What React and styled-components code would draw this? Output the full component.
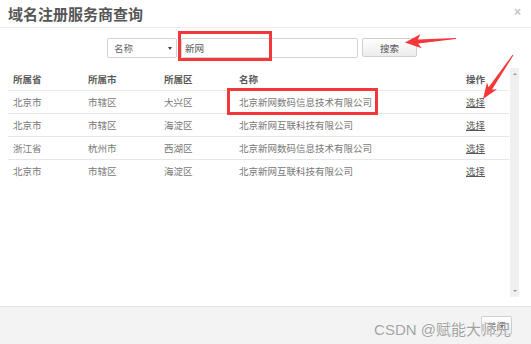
import styled, { createGlobalStyle } from "styled-components";

const GlobalStyle = createGlobalStyle`
  html, body {
    margin: 0;
    padding: 0;
    background: #fff;
  }
  body {
    font-family: "Noto Sans CJK SC", "Liberation Sans", sans-serif;
  }
`;

const Dialog = styled.div`
  position: relative;
  width: 531px;
  height: 344px;
  display: flex;
  flex-direction: column;
  overflow: hidden;
  background: #fff;
`;

const Header = styled.div`
  height: 27px;
  display: flex;
  align-items: center;
  justify-content: space-between;
  padding: 0 10px 0 8px;
  border-bottom: 1px solid #ececec;
`;

const Title = styled.h1`
  margin: 0;
  font-size: 15px;
  font-weight: bold;
  color: #555;
  line-height: 1;
`;

const Close = styled.span`
  font-family: "Liberation Sans", sans-serif;
  font-size: 12px;
  font-weight: bold;
  color: #c4c4c4;
  margin-top: -4px;
`;

const Body = styled.div`
  flex: 1;
  display: flex;
  flex-direction: column;
  padding: 10px 12px 0 8px;
`;

const SearchRow = styled.div`
  display: flex;
  align-items: flex-start;
  padding-left: 99px;
  gap: 4px;
  height: 21px;
`;

const Select = styled.div`
  width: 70px;
  height: 20px;
  box-sizing: border-box;
  border: 1px solid #d4d4d4;
  border-radius: 2px;
  display: flex;
  align-items: center;
  justify-content: space-between;
  padding: 0 4px 0 6px;
  font-size: 9.5px;
  color: #666;
`;

const Caret = styled.span`
  width: 0;
  height: 0;
  border-left: 2.5px solid transparent;
  border-right: 2.5px solid transparent;
  border-top: 3px solid #444;
`;

const Input = styled.input`
  width: 177px;
  height: 20px;
  box-sizing: border-box;
  border: 1px solid #d4d4d4;
  border-radius: 2px;
  padding: 0 3px;
  font-family: inherit;
  font-size: 9.5px;
  color: #555;
  outline: none;
`;

const Button = styled.button`
  width: ${(p) => p.$w || 55}px;
  height: ${(p) => p.$h || 19}px;
  box-sizing: border-box;
  border: 1px solid #cfcfcf;
  border-radius: 2px;
  background: linear-gradient(#fff, #ececec);
  font-family: inherit;
  font-size: 9.5px;
  color: #555;
  padding: 0;
`;

const TableWrap = styled.div`
  margin-top: 9px;
  height: 229px;
  display: flex;
`;

const Table = styled.table`
  flex: 1;
  align-self: flex-start;
  border-collapse: collapse;
  table-layout: fixed;
  font-size: 9.5px;
  color: #777;

  th {
    height: 22px;
    text-align: left;
    font-weight: bold;
    color: #5a5a5a;
    padding: 0 0 0 5px;
    border-bottom: 1px solid #eaeaea;
  }
  td {
    height: 22px;
    padding: 0 0 0 5px;
    border-bottom: 1px solid #e6e6e6;
    white-space: nowrap;
  }
  tr:last-child td {
    border-bottom: none;
  }
`;

const Pick = styled.a`
  color: #555;
  text-decoration: underline;
`;

const Scrollbar = styled.div`
  width: 9px;
  margin-left: 1px;
  background: #f0f0f0;
  display: flex;
  flex-direction: column;
  justify-content: space-between;
  align-items: center;
  padding: 5px 0;
  box-sizing: border-box;
`;

const ScrollArrow = styled.span`
  width: 0;
  height: 0;
  border-left: 2px solid transparent;
  border-right: 2px solid transparent;
  ${(p) =>
    p.$up ? "border-bottom: 2px solid #999;" : "border-top: 2px solid #999;"}
`;

const Footer = styled.div`
  height: 37px;
  border-top: 1px solid #e2e2e2;
  background: #f3f3f3;
  display: flex;
  align-items: center;
  justify-content: flex-end;
  padding: 0 19px 0 0;
`;

const Watermark = styled.div`
  position: absolute;
  right: 20px;
  bottom: 5px;
  font-family: "Liberation Sans", "Noto Sans CJK SC", sans-serif;
  font-size: 15px;
  color: #a2a2a2;
  text-shadow: 0 0 1px #fff, 0 0 1px #fff;
  pointer-events: none;
`;

const Marks = styled.svg`
  position: absolute;
  left: 0;
  top: 0;
  pointer-events: none;
`;

const rows = [
  ["北京市", "市辖区", "大兴区", "北京新网数码信息技术有限公司"],
  ["北京市", "市辖区", "海淀区", "北京新网互联科技有限公司"],
  ["浙江省", "杭州市", "西湖区", "北京新网数码信息技术有限公司"],
  ["北京市", "市辖区", "海淀区", "北京新网互联科技有限公司"],
];

export default function App() {
  return (
    <>
      <GlobalStyle />
      <Dialog>
        <Header>
          <Title>域名注册服务商查询</Title>
          <Close>×</Close>
        </Header>
        <Body>
          <SearchRow>
            <Select>
              名称
              <Caret />
            </Select>
            <Input defaultValue="新网" />
            <Button>搜索</Button>
          </SearchRow>
          <TableWrap>
            <Table>
              <colgroup>
                <col style={{ width: 75 }} />
                <col style={{ width: 76 }} />
                <col style={{ width: 75 }} />
                <col style={{ width: 227 }} />
                <col />
              </colgroup>
              <thead>
                <tr>
                  <th>所属省</th>
                  <th>所属市</th>
                  <th>所属区</th>
                  <th>名称</th>
                  <th>操作</th>
                </tr>
              </thead>
              <tbody>
                {rows.map((r, i) => (
                  <tr key={i}>
                    {r.map((c, j) => (
                      <td key={j}>{c}</td>
                    ))}
                    <td>
                      <Pick>选择</Pick>
                    </td>
                  </tr>
                ))}
              </tbody>
            </Table>
            <Scrollbar>
              <ScrollArrow $up />
              <ScrollArrow />
            </Scrollbar>
          </TableWrap>
        </Body>
        <Footer>
          <Button $w={31} $h={19}>关闭</Button>
        </Footer>
        <Watermark>CSDN @赋能大师兄</Watermark>
        <Marks width="531" height="344" viewBox="0 0 531 344">
          <g fill="none" stroke="#f2383a" strokeWidth="3">
            <rect x="179.5" y="32.5" width="91" height="27" />
            <rect x="228.5" y="89.5" width="148" height="24" />
          </g>
          <g fill="#f2383a">
            <polygon points="405,42.5 420.4,34.2 417.8,39.5 456,37.9 456,39.1 418.2,43.5 421.6,48.2" />
            <polygon points="483,99 487,82.4 488.6,87.2 512.6,54.7 513.4,55.3 492,89.4 497,89.2" />
          </g>
        </Marks>
      </Dialog>
    </>
  );
}
